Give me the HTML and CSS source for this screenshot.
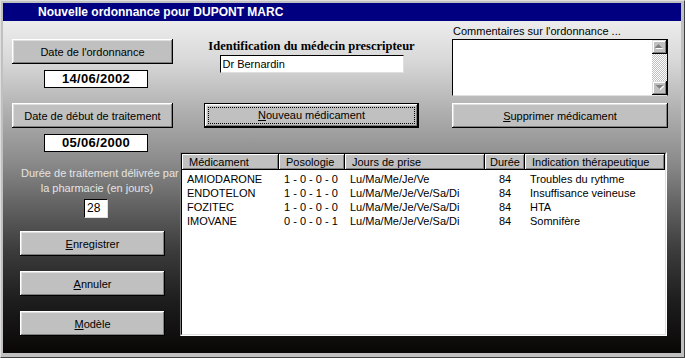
FILE: index.html
```html
<!DOCTYPE html>
<html lang="fr">
<head>
    <meta charset="UTF-8">
    <title>Nouvelle ordonnance</title>
    <link rel="stylesheet" href="styles.css">
</head>
<body>

    <div class="window">
        <div class="titlebar">Nouvelle ordonnance pour DUPONT MARC</div>

        <div class="dialog">
            <!-- Left column: dates, duration and actions -->
            <div class="left">
                <button class="btn btn-wide">Date de l'ordonnance</button>
                <div class="datebox">14/06/2002</div>
                <button class="btn btn-wide btn-gap">Date de début de traitement</button>
                <div class="datebox">05/06/2000</div>

                <p class="duration">Durée de traitement délivrée par<br>la pharmacie (en jours)</p>
                <div class="field days">28</div>

                <button class="btn action first"><u>E</u>nregistrer</button>
                <button class="btn action"><u>A</u>nnuler</button>
                <button class="btn action"><u>M</u>odèle</button>
            </div>

            <!-- Right part: doctor, comments, medication list -->
            <div class="right">
                <div class="top">
                    <div class="doctor">
                        <div class="doctor-label">Identification du médecin prescripteur</div>
                        <div class="field doctor-name">Dr Bernardin</div>
                    </div>

                    <div class="comments">
                        <div class="comments-label">Commentaires sur l'ordonnance ...</div>
                        <div class="memo">
                            <div class="memo-text"></div>
                            <div class="scrollbar">
                                <div class="sb-btn">
                                    <svg width="9" height="6" viewBox="0 0 9 6">
                                        <polygon points="4.5,1 8.5,5 0.5,5" fill="#fff"/>
                                        <polygon points="3.5,0 7.5,4 -0.5,4" fill="#808080"/>
                                    </svg>
                                </div>
                                <div class="sb-track"></div>
                                <div class="sb-btn">
                                    <svg width="9" height="6" viewBox="0 0 9 6">
                                        <polygon points="1.5,1 9.5,1 5.5,5" fill="#fff"/>
                                        <polygon points="0.5,0 8.5,0 4.5,4" fill="#808080"/>
                                    </svg>
                                </div>
                            </div>
                        </div>
                    </div>

                    <button class="btn btn-default"><span class="focus"><u>N</u>ouveau médicament</span></button>
                    <button class="btn"><u>S</u>upprimer médicament</button>
                </div>

                <div class="list">
                    <div class="list-inner">
                        <table>
                            <colgroup>
                                <col style="width: 97px">
                                <col style="width: 66px">
                                <col style="width: 140px">
                                <col style="width: 40px">
                                <col>
                            </colgroup>
                            <thead>
                                <tr>
                                    <th>Médicament</th>
                                    <th>Posologie</th>
                                    <th>Jours de prise</th>
                                    <th class="center">Durée</th>
                                    <th>Indication thérapeutique</th>
                                </tr>
                            </thead>
                            <tbody>
                                <tr>
                                    <td>AMIODARONE</td>
                                    <td>1 - 0 - 0 - 0</td>
                                    <td>Lu/Ma/Me/Je/Ve</td>
                                    <td class="center">84</td>
                                    <td>Troubles du rythme</td>
                                </tr>
                                <tr>
                                    <td>ENDOTELON</td>
                                    <td>1 - 0 - 1 - 0</td>
                                    <td>Lu/Ma/Me/Je/Ve/Sa/Di</td>
                                    <td class="center">84</td>
                                    <td>Insuffisance veineuse</td>
                                </tr>
                                <tr>
                                    <td>FOZITEC</td>
                                    <td>1 - 0 - 0 - 0</td>
                                    <td>Lu/Ma/Me/Je/Ve/Sa/Di</td>
                                    <td class="center">84</td>
                                    <td>HTA</td>
                                </tr>
                                <tr>
                                    <td>IMOVANE</td>
                                    <td>0 - 0 - 0 - 1</td>
                                    <td>Lu/Ma/Me/Je/Ve/Sa/Di</td>
                                    <td class="center">84</td>
                                    <td>Somnifère</td>
                                </tr>
                            </tbody>
                        </table>
                    </div>
                </div>
            </div>
        </div>
    </div>

</body>
</html>
```

FILE: styles.css
```css
/* Reset */
*, *::before, *::after {
    box-sizing: border-box;
    margin: 0;
    padding: 0;
}

body {
    font-family: 'Liberation Sans', Arial, sans-serif;
    font-size: 11px;
    color: #000;
    background: #c0c0c0;
}

/* Window frame */
.window {
    width: 685px;
    height: 358px;
    display: flex;
    flex-direction: column;
    background: #c0c0c0;
    border: 1px solid;
    border-color: #dfdfdf #404040 #404040 #dfdfdf;
    padding: 2px 3px 4px 2px;
}

.titlebar {
    height: 18px;
    line-height: 18px;
    padding-left: 35px;
    background: #000080;
    color: #fff;
    font-size: 12px;
    font-weight: bold;
}

/* Dialog body with the grey-to-black fade */
.dialog {
    flex: 1;
    display: flex;
    background: linear-gradient(to bottom,
        #ececec 0%,
        #d8d8d8 12%,
        #b0b0b0 27%,
        #8c8c8c 42%,
        #646464 55%,
        #3c3c3c 69%,
        #1e1e1e 84%,
        #0a0606 100%);
}

/* Classic raised button */
.btn {
    height: 25px;
    border: none;
    background: #c0c0c0;
    font: inherit;
    color: #000;
    text-align: center;
    box-shadow: inset -1px -1px #000, inset 1px 1px #fff,
                inset -2px -2px #808080, inset 2px 2px #dfdfdf;
}

.btn u {
    text-decoration-thickness: 1px;
    text-underline-offset: 1px;
}

.btn-default {
    border: 1px solid #000;
    padding: 3px;
}

.btn-default .focus {
    display: block;
    height: 100%;
    line-height: 15px;
    border: 1px dotted #000;
}

/* Sunken white field */
.field {
    background: #fff;
    border: 1px solid;
    border-color: #000 #dfdfdf #dfdfdf #000;
    padding-left: 2px;
}

/* Left column */
.left {
    width: 161px;
    margin-left: 9px;
    padding-top: 18px;
    display: flex;
    flex-direction: column;
    align-items: flex-start;
}

.btn-wide {
    width: 161px;
}

.btn-gap {
    margin-top: 15px;
}

.datebox {
    width: 104px;
    height: 18px;
    margin: 6px 0 0 32px;
    background: #fff;
    border: 1px solid #000;
    font-size: 13px;
    font-weight: bold;
    letter-spacing: 0.3px;
    line-height: 16px;
    text-align: center;
}

.duration {
    width: 100%;
    margin-top: 14px;
    padding-left: 9px;
    line-height: 15px;
    text-align: center;
    color: #e4e4e4;
    white-space: nowrap;
}

.days {
    width: 24px;
    height: 19px;
    margin: 3px 0 0 72px;
    line-height: 17px;
    font-size: 12px;
}

.action {
    width: 145px;
    margin: 15px 0 0 8px;
}

.action.first {
    margin-top: 13px;
}

/* Right part */
.right {
    width: 488px;
    margin-left: 7px;
    padding-top: 3px;
    display: flex;
    flex-direction: column;
}

.top {
    display: grid;
    grid-template-columns: 215px 216px;
    column-gap: 33px;
    row-gap: 7px;
    padding-left: 24px;
}

.doctor {
    padding-top: 15px;
    display: flex;
    flex-direction: column;
    align-items: center;
}

.doctor-label {
    font-family: 'Liberation Serif', 'Times New Roman', serif;
    font-size: 12.5px;
    font-weight: bold;
    line-height: 15px;
    white-space: nowrap;
}

.doctor-name {
    width: 184px;
    height: 18px;
    margin-top: 1px;
    line-height: 16px;
}

.comments-label {
    line-height: 14px;
    padding-left: 1px;
}

.memo {
    height: 57px;
    margin-top: 1px;
    display: flex;
    background: #fff;
    border: 1px solid;
    border-color: #000 #000 #dfdfdf #000;
}

.memo-text {
    flex: 1;
}

.scrollbar {
    width: 15px;
    display: flex;
    flex-direction: column;
}

.sb-btn {
    height: 14px;
    display: flex;
    align-items: center;
    justify-content: center;
    background: #c0c0c0;
    box-shadow: inset -1px -1px #000, inset 1px 1px #dfdfdf,
                inset -2px -2px #808080, inset 2px 2px #fff;
}

.sb-track {
    flex: 1;
    background: repeating-conic-gradient(#c0c0c0 0 25%, #fff 0 50%) 0 0 / 2px 2px;
}

/* Medication list */
.list {
    width: 487px;
    height: 184px;
    margin-top: 24px;
    border: 1px solid;
    border-color: #808080 #fff #fff #808080;
}

.list-inner {
    height: 100%;
    background: #fff;
    border: 1px solid;
    border-color: #000 #dfdfdf #dfdfdf #000;
}

table {
    width: 483px;
    table-layout: fixed;
    border-collapse: separate;
    border-spacing: 0;
}

th {
    height: 16px;
    padding-left: 7px;
    background: #c0c0c0;
    font-weight: normal;
    text-align: left;
    white-space: nowrap;
    box-shadow: inset -1px -1px #000, inset 1px 1px #fff,
                inset -2px -2px #808080;
}

td {
    height: 14px;
    line-height: 14px;
    padding-left: 5px;
    white-space: nowrap;
}

tbody tr:first-child td {
    padding-top: 2px;
    height: 16px;
}

th.center,
td.center {
    text-align: center;
    padding-left: 0;
}
```
